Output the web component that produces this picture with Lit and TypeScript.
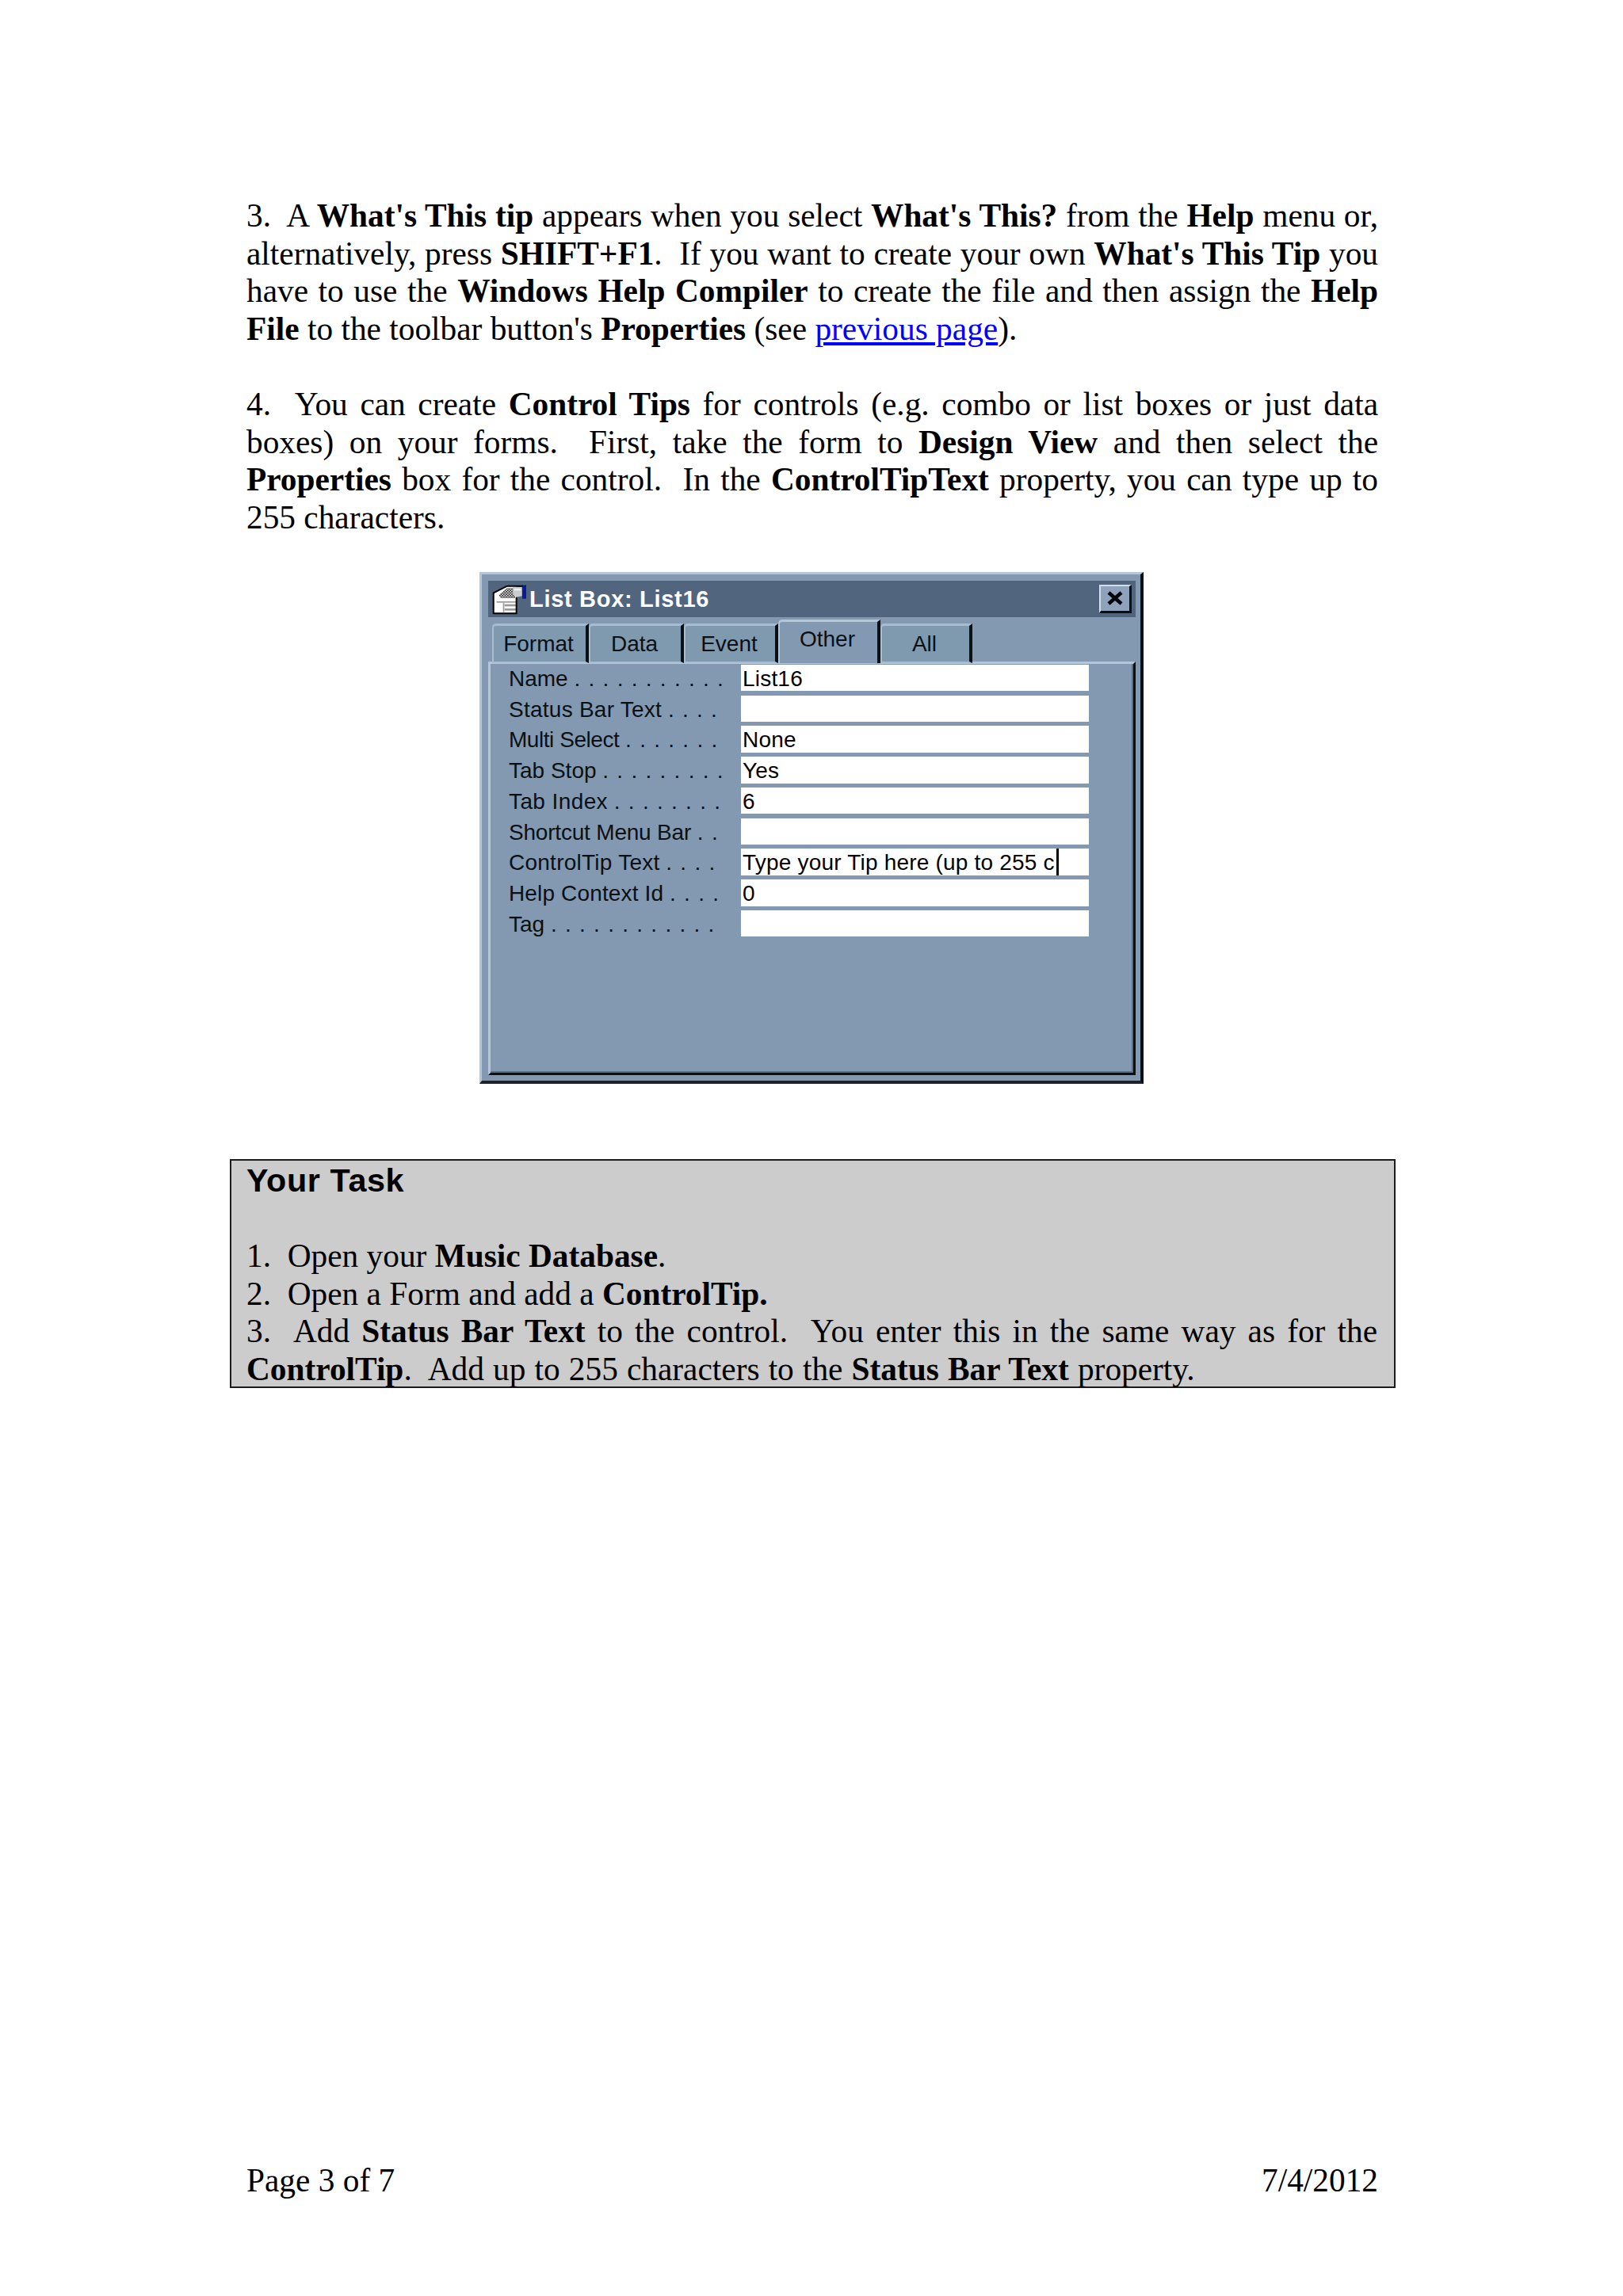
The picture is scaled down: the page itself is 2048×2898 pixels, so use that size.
import { LitElement, html, css, svg } from "lit";
import { customElement } from "lit/decorators.js";

const ROWS = [
  { label: "Name", dots: ". . . . . . . . . . .", value: "List16", ls: 0 },
  { label: "Status Bar Text", dots: ". . . .", value: "", ls: 0.25 },
  { label: "Multi Select", dots: ". . . . . . .", value: "None", ls: -0.45 },
  { label: "Tab Stop", dots: ". . . . . . . . .", value: "Yes", ls: 0 },
  { label: "Tab Index", dots: ". . . . . . . .", value: "6", ls: 0.4 },
  { label: "Shortcut Menu Bar", dots: ". .", value: "", ls: -0.2 },
  { label: "ControlTip Text", dots: ". . . .", value: "Type your Tip here (up to 255 c", caret: true, ls: 0.25 },
  { label: "Help Context Id", dots: ". . . .", value: "0", ls: 0.15 },
  { label: "Tag", dots: ". . . . . . . . . . . .", value: "", ls: 0 },
];

const TABS = [
  { label: "Format", w: 122 },
  { label: "Data", w: 120 },
  { label: "Event", w: 119 },
  { label: "Other", w: 129, active: true },
  { label: "All", w: 116 },
];

const formIcon = svg`
  <defs>
    <pattern id="chk" width="10" height="10" patternUnits="userSpaceOnUse">
      <rect width="10" height="10" fill="#d8d8d8"/>
      <rect width="5" height="5" fill="#333"/>
      <rect x="5" y="5" width="5" height="5" fill="#333"/>
    </pattern>
  </defs>
  <polygon points="50,158 50,84 100,58 135,58 135,158" fill="#fff"/>
  <polygon points="68,90 100,64 130,64 130,102 76,102" fill="url(#chk)"/>
  <polygon points="122,60 156,60 156,94 136,98 122,86" fill="#c9cdd2"/>
  <rect x="126" y="66" width="26" height="7" fill="#f2f2f2"/>
  <rect x="157" y="52" width="15" height="52" fill="#0b1a96"/>
  <rect x="160" y="47" width="8" height="5" fill="#5a7a3a"/>
  <rect x="60" y="114" width="74" height="5" fill="#9a9a9a"/>
  <rect x="84" y="119" width="5" height="36" fill="#9a9a9a"/>
  <rect x="90" y="125" width="44" height="8" fill="#9a9a9a"/>
  <rect x="90" y="141" width="44" height="8" fill="#9a9a9a"/>
  <path d="M48 162V82L100 56H158M135 98V160H48" fill="none" stroke="#060606" stroke-width="6"/>
`;

@customElement("app-root")
export class AppRoot extends LitElement {
  static styles = css`
    :host {
      display: block;
      min-height: 2898px;
      background: #fff;
      color: #000;
    }
    .page {
      box-sizing: border-box;
      width: 2048px;
      height: 2898px;
      padding: 249px 309px 0 311px;
      font: 41.35px/47.6px "Liberation Serif", "Times New Roman", serif;
    }
    .para {
      margin: 0 0 47.6px;
    }
    .line {
      display: block;
      white-space: pre-wrap;
      text-align: justify;
      text-align-last: justify;
    }
    .line.end {
      text-align: left;
      text-align-last: left;
    }
    .line.wide {
      word-spacing: 0.8px;
    }
    a {
      color: #0000ff;
      text-decoration: underline;
    }
    .dialog {
      box-sizing: border-box;
      width: 838px;
      height: 646px;
      margin: -3px 0 0 294px;
      padding: 8px 6px 7px 8px;
      display: flex;
      flex-direction: column;
      background: #8399b1;
      border-style: solid;
      border-width: 3px 4px 4px 3px;
      border-color: #b5c6d9 #0a1015 #1a222b #b5c6d9;
      font-family: "Liberation Sans", Arial, sans-serif;
      font-size: 28px;
      line-height: 32px;
    }
    .title {
      height: 46px;
      flex: none;
      display: flex;
      align-items: center;
      gap: 3px;
      padding: 0 5px 0 4px;
      background: #52657f;
      color: #fff;
    }
    .title-icon {
      width: 45px;
      height: 40px;
      flex: none;
    }
    .title-text {
      flex: 1;
      font-weight: bold;
      font-size: 29px;
      letter-spacing: 0.7px;
    }
    .close {
      box-sizing: border-box;
      width: 41px;
      height: 36px;
      flex: none;
      display: flex;
      align-items: center;
      justify-content: center;
      background: #8ea3bb;
      border-style: solid;
      border-width: 2px 3px 3px 2px;
      border-color: #d3deea #0a0f14 #0a0f14 #d3deea;
    }
    .tabs {
      height: 58px;
      flex: none;
      display: flex;
      align-items: flex-end;
      padding-left: 5px;
      position: relative;
      z-index: 1;
      margin-bottom: -2px;
    }
    .tab {
      box-sizing: border-box;
      height: 50px;
      flex: none;
      padding: 7px 3px 0 0;
      text-align: center;
      color: #0a1014;
      background: #7f99af;
      border-style: solid;
      border-width: 3px 4px 2px 2px;
      border-color: #aabcd0 #0a1116 #aabcd0 #aabcd0;
      border-top-left-radius: 5px;
    }
    .tab.active {
      height: 55px;
      background: #8399b1;
      padding-top: 6px;
      padding-bottom: 4px;
      border-bottom: none;
      border-color: #b5c6d9 #0a1116 transparent #b5c6d9;
    }
    .panel {
      flex: 1;
      box-sizing: border-box;
      border-style: solid;
      border-width: 3px;
      border-color: #b5c6d9 #0a1116 #0a1116 #b5c6d9;
      box-shadow: inset -2px -2px 0 #5d6f84;
      padding: 1px 0 0 23px;
      display: grid;
      grid-template-columns: 293px 439px;
      grid-auto-rows: 33.5px;
      row-gap: 5.25px;
      align-content: start;
      color: #0a1014;
    }
    .label {
      white-space: pre;
      line-height: 35px;
      overflow: hidden;
    }
    .dots {
      letter-spacing: 0;
      word-spacing: 2.5px;
    }
    .field {
      background: #fff;
      color: #000;
      padding-left: 2px;
      line-height: 35px;
      letter-spacing: 0.2px;
      white-space: pre;
      display: flex;
      align-items: stretch;
      overflow: hidden;
    }
    .caret {
      width: 3px;
      background: #000;
      margin-left: 2px;
    }
    .task {
      margin: 95px -22px 0 -21.5px;
      height: 289px;
      box-sizing: border-box;
      padding: 2px 21px 0 19.5px;
      background: #cccccc;
      border: 2px solid #1c1c1c;
    }
    .task h2 {
      margin: 0 0 47.6px;
      font: bold 41.35px/47.6px "Liberation Sans", Arial, sans-serif;
      letter-spacing: 0.6px;
    }
    .footer {
      margin-top: 977px;
      display: flex;
      justify-content: space-between;
    }
  `;

  render() {
    return html`
      <div class="page">
        <p class="para">
          <span class="line">3.  A <b>What's This tip</b> appears when you select <b>What's This?</b> from the <b>Help</b> menu or,</span>
          <span class="line">alternatively, press <b>SHIFT+F1</b>.  If you want to create your own <b>What's This Tip</b> you</span>
          <span class="line">have to use the <b>Windows Help Compiler</b> to create the file and then assign the <b>Help</b></span>
          <span class="line end"><b>File</b> to the toolbar button's <b>Properties</b> (see <a href="#">previous page</a>).</span>
        </p>
        <p class="para">
          <span class="line">4.  You can create <b>Control Tips</b> for controls (e.g. combo or list boxes or just data</span>
          <span class="line">boxes) on your forms.  First, take the form to <b>Design View</b> and then select the</span>
          <span class="line"><b>Properties</b> box for the control.  In the <b>ControlTipText</b> property, you can type up to</span>
          <span class="line end">255 characters.</span>
        </p>
        <div class="dialog">
          <div class="title">
            <svg class="title-icon" viewBox="40 45 135 120">${formIcon}</svg>
            <div class="title-text">List Box: List16</div>
            <div class="close">
              <svg width="22" height="18" viewBox="0 0 22 18"><path d="M3 2L19 16M19 2L3 16" stroke="#05080c" stroke-width="4.5" fill="none"/></svg>
            </div>
          </div>
          <div class="tabs">
            ${TABS.map(
              (t) => html`<div class="tab ${t.active ? "active" : ""}" style="width:${t.w}px">${t.label}</div>`
            )}
          </div>
          <div class="panel">
            ${ROWS.map(
              (r) => html`
                <div class="label"><span style="letter-spacing:${r.ls}px">${r.label}</span> <span class="dots">${r.dots}</span></div>
                <div class="field"><span>${r.value}</span>${r.caret ? html`<span class="caret"></span>` : ""}</div>
              `
            )}
          </div>
        </div>
        <div class="task">
          <h2>Your Task</h2>
          <span class="line end">1.  Open your <b>Music Database</b>.</span>
          <span class="line end">2.  Open a Form and add a <b>ControlTip.</b></span>
          <span class="line">3.  Add <b>Status Bar Text</b> to the control.  You enter this in the same way as for the</span>
          <span class="line end wide"><b>ControlTip</b>.  Add up to 255 characters to the <b>Status Bar Text</b> property.</span>
        </div>
        <div class="footer"><span>Page 3 of 7</span><span>7/4/2012</span></div>
      </div>
    `;
  }
}
